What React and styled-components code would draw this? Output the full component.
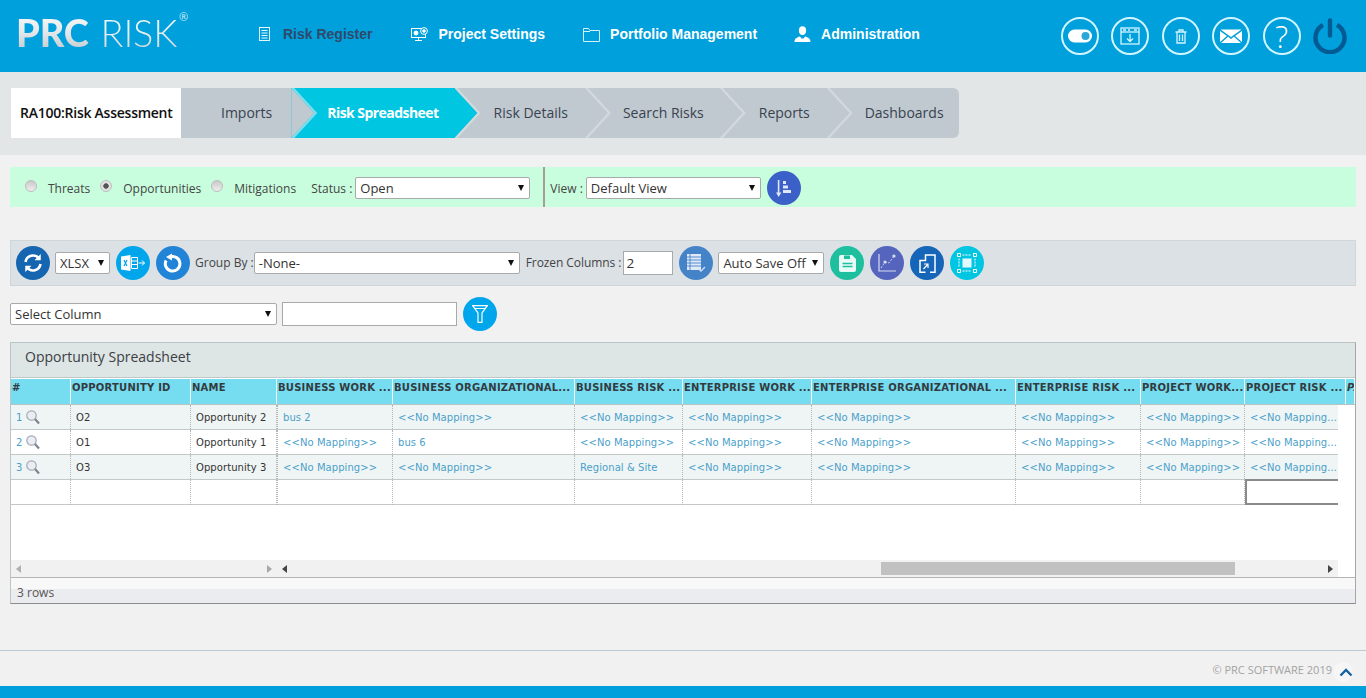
import React from 'react';
import styled, { createGlobalStyle, css } from 'styled-components';

const Global = createGlobalStyle`
  html, body { margin: 0; padding: 0; background: #f1f1f1; }
  body { font-family: "Open Sans", "Liberation Sans", sans-serif; color: #444; }
  #root { min-height: 698px; display: flex; flex-direction: column; overflow: hidden; }
  * { box-sizing: border-box; }
`;

const TopBar = styled.header`
  height: 72px; background: #00a0dc; display: flex; align-items: flex-start;
  padding-left: 16px; padding-right: 19px; flex: none;
`;
const Logo = styled.div`
  width: 242px; height: 72px; padding-top: 8px; display: flex; align-items: flex-start;
  font-family: Lato, "Open Sans", sans-serif; font-size: 38px; line-height: 48px; position: relative;
  letter-spacing: -0.2px;
`;
const LogoPRC = styled.span`
  font-weight: 900; margin-right: 12px;
  background: linear-gradient(180deg, #fff 0%, #e4e8ea 50%, #b9c2c7 100%);
  -webkit-background-clip: text; background-clip: text; color: transparent;
`;
const LogoRisk = styled.span`
  font-weight: 300;
  background: linear-gradient(180deg, #fff 0%, #e8ecee 55%, #c5ccd0 100%);
  -webkit-background-clip: text; background-clip: text; color: transparent;
`;
const LogoReg = styled.span`
  position: absolute; left: 163px; top: 10px; font-size: 11px; line-height: 14px; color: #d7eef7;
  font-family: "Open Sans", sans-serif;
`;
const Nav = styled.nav`display: flex; align-items: center; height: 68px; gap: 38px;`;
const NavItem = styled.a`
  display: flex; align-items: center; gap: ${p => p.$gap || 10}px; margin-left: ${p => p.$ml ?? 0}px;
  font-family: "Liberation Sans", Arial, sans-serif; font-weight: 700; font-size: 14px; white-space: nowrap;
  color: ${p => p.$active ? '#2f4a6b' : '#fff'};
`;
const TopActions = styled.div`margin-left: auto; display: flex; align-items: center; gap: 12.4px; height: 72px;`;
const RingButton = styled.div`
  width: 38px; height: 38px; border-radius: 50%; border: 2px solid #d3f5ff; display: flex;
  align-items: center; justify-content: center; color: #fff; flex: none;
`;
const HelpMark = styled.span`font-family: "Open Sans", sans-serif; font-size: 31px; line-height: 34px; color: #fff; font-weight: 300;`;

const CrumbZone = styled.div`height: 83px; background: #e2e6e7; padding: 16px 0 0 11px; flex: none;`;
const CrumbBar = styled.div`
  display: flex; width: 948px; height: 50px; background: #bfc9cf; border-radius: 0 6px 6px 0; overflow: hidden;
  font-size: 14px; line-height: 50px;
`;
const CrumbTitle = styled.div`
  width: 170px; background: #fff; color: #111; font-weight: 600; padding-left: 9px; white-space: nowrap; flex: none;
  letter-spacing: -0.25px;
`;
const Crumb = styled.div`
  position: relative; height: 50px; white-space: nowrap; flex: none;
  padding: 0 ${p => p.$pr}px 0 ${p => p.$pl}px;
  color: #3a4250;
  ${p => p.$active && css`
    background: #00c6e2; color: #fff; font-weight: 700; letter-spacing: -0.55px;
  `}
  ${p => !p.$last && css`
    &::before {
      content: ''; position: absolute; z-index: 2; top: 0; left: 100%; width: 23px; height: 50px;
      background: ${p.$active ? '#00c6e2' : '#bfc9cf'}; clip-path: polygon(0 0, 23px 25px, 0 50px);
    }
    &::after {
      content: ''; position: absolute; z-index: 3; top: 0; left: 100%; width: 27px; height: 50px;
      background: ${p.$next ? '#7fdcec' : '#d3d9dd'};
      clip-path: polygon(0 0, 3px 0, 26px 25px, 3px 50px, 0 50px, 23px 25px);
    }
  `}
`;

const Main = styled.main`padding: 12px 10px 0; flex: none;`;
const FilterBand = styled.div`
  height: 40px; background: #c8fedd; display: flex; align-items: center; font-size: 12px; color: #444;
  padding: 2px 0 0 15px;
`;
const Radio = styled.span`
  width: 12px; height: 12px; border-radius: 50%; border: 1px solid #bdbdbd; flex: none; margin-top: -4px;
  background: ${p => p.$on ? 'radial-gradient(circle, #555 0 2.4px, #ddd 3px, #f0f0f0 100%)' : 'linear-gradient(180deg, #c9c9c9, #efefef)'};
  margin-right: 11px;
`;
const Label = styled.span`
  white-space: nowrap; margin-right: ${p => p.$mr ?? 0}px; margin-left: ${p => p.$ml ?? 0}px; margin-top: ${p => p.$mt ?? 0}px;
  font-size: 12px; color: ${p => p.$c || '#444'}; letter-spacing: ${p => p.$ls ?? 0}px;
`;
const Dropdown = styled.div`
  position: relative; flex: none; width: ${p => p.$w}px; height: ${p => p.$h || 22}px; background: #fff;
  border: 1px solid #a9a9a9; border-radius: 2px; font-size: 13px; line-height: ${p => (p.$h || 22) - 2}px;
  color: #333; padding-left: 4px; white-space: nowrap; margin-left: ${p => p.$ml ?? 0}px;
  &::after {
    content: ''; position: absolute; right: ${p => p.$ar ?? 5}px; top: 50%; margin-top: -3px;
    border-left: 3.5px solid transparent; border-right: 3.5px solid transparent; border-top: 6px solid #111;
  }
`;
const VRule = styled.span`
  width: 2px; height: 40px; background: #a89b98; margin: -2px 5px 0 13px; flex: none; align-self: flex-start;
`;
const RoundBtn = styled.div`
  width: 34px; height: 34px; border-radius: 50%; background: ${p => p.$bg}; flex: none; color: #fff;
  display: flex; align-items: center; justify-content: center; margin-left: ${p => p.$ml ?? 0}px;
`;
const Toolbar = styled.div`
  height: 46px; margin-top: 33px; background: #dbe1e4; border: 1px solid #ced6d9; display: flex; align-items: center;
  padding-left: 5px; font-size: 12px;
`;
const NumberBox = styled.div`
  width: 50px; height: 24px; background: #fff; border: 1px solid #a9a9a9; font-size: 13.5px; line-height: 23px;
  padding-left: 2px; color: #333; flex: none; margin-left: 2px; margin-top: -1px;
`;
const ColumnFilter = styled.div`height: 34px; margin-top: 11px; display: flex; align-items: center;`;
const TextBox = styled.div`width: 175px; height: 24px; background: #fff; border: 1px solid #a9a9a9; flex: none; margin-left: 5px;`;

const Panel = styled.section`
  margin-top: 11px; width: 1346px; border: 1px solid #bcc5c6; border-bottom: 1px solid #8c8c8c;
  border-right: 1px solid #a5a8a8; border-left: 1px solid #bcc5c6; background: #fff;
`;
const PanelTitle = styled.div`
  height: 35px; background: #dde5e5; font-size: 14px; line-height: 28px; padding-left: 14px; color: #3c4044;
  border-bottom: 1px solid #c0c8c8;
`;
const tableFont = css`font-family: "DejaVu Sans", Verdana, sans-serif; font-size: 10px; white-space: nowrap;`;
const HeadRow = styled.div`
  display: grid; grid-template-columns: 60px 120px 86px 116px 182px 108px 129px 204px 125px 104px 101px 1fr;
  height: 27px; background: #76dcef; border-top: 1px solid #fff; border-bottom: 1px solid #b8c4c4;
`;
const HeadCell = styled.div`
  ${tableFont}; font-weight: 700; color: #333a40; line-height: 18px; padding-left: 1px; overflow: hidden;
  border-right: 1px solid #eefafc; letter-spacing: 0.22px;
  font-style: ${p => p.$italic ? 'italic' : 'normal'};
`;
const RowsArea = styled.div`height: 155px; background: #fff;`;
const Row = styled.div`
  display: grid; width: 1327px; height: 25px; border-bottom: 1px solid #c4c8c8;
  grid-template-columns: 60px 120px 86px 116px 182px 108px 129px 204px 125px 104px 93px;
  background: ${p => p.$odd ? '#eff5f4' : '#fff'};
`;
const Cell = styled.div`
  ${tableFont}; overflow: hidden; padding: 1px 0 0 ${p => p.$pl ?? 5}px; letter-spacing: 0.07px;
  color: ${p => p.$link ? '#4b9fcb' : '#333'};
  border-right: ${p => p.$plain ? 'none' : '1px dotted #b5b5b5'};
  ${p => p.$frozen && 'border-left: 1px dotted #b5b5b5;'}
  ${p => p.$active && 'border: 2px solid #8a8a8a; border-right: none; margin-top: -1px; height: 26px;'}
  display: flex; align-items: center;
`;
const RowNum = styled.span`color: #4b9fcb; margin-right: 4px;`;
const ScrollRow = styled.div`display: flex; height: 17px; background: #fff;`;
const ScrollLeft = styled.div`width: 266px; background: #f1f1f1; display: flex; align-items: center; justify-content: space-between; padding: 0 5px; flex: none;`;
const ScrollRight = styled.div`width: 1061px; background: #f1f1f1; display: flex; align-items: center; padding: 0 5px; flex: none;`;
const Thumb = styled.div`width: 354px; height: 13px; background: #c1c1c1; margin-left: 594px;`;
const ArrowTip = styled.span`
  width: 0; height: 0; border-top: 4px solid transparent; border-bottom: 4px solid transparent; flex: none;
  ${p => p.$dir === 'left' ? `border-right: 5px solid ${p.$c};` : `border-left: 5px solid ${p.$c};`}
  margin-left: ${p => p.$auto ? 'auto' : '0'};
`;
const StatusBar = styled.div`
  height: 26px; border-top: 1px solid #b5b5b5; font-size: 12px; line-height: 30px; padding-left: 6px; color: #555;
  background: linear-gradient(180deg, #f8f8f8 0 45%, #ebecef 45% 100%);
`;
const FootZone = styled.footer`
  margin-top: 46px; height: 36px; border-top: 1px solid #bccbd3; display: flex; align-items: flex-start; justify-content: flex-end;
  padding: 10px 13px 0 0; font-size: 11px; color: #a3a3a3; flex: none;
`;
const Copyright = styled.span`white-space: nowrap; line-height: 18px;`;
const UpButton = styled.div`
  width: 20px; height: 20px; border-radius: 50%; background: #f6f6f6; margin-left: 1px; margin-top: 1px;
  display: flex; align-items: center; justify-content: center; color: #14629f; padding: 1px 0 0 5px; overflow: visible;
`;
const BottomBar = styled.div`flex: 1 0 12px; min-height: 12px; background: #00a0dc;`;

const IcoRegister = () => (
  <svg width="13" height="14" viewBox="0 0 13 14" fill="none" stroke="#e6f7fd" strokeWidth="1">
    <rect x="1.5" y="0.5" width="10" height="13" /><path d="M3.5 3.5h6M3.5 6h6M3.5 8.5h6M3.5 11h6" />
  </svg>
);
const IcoSettings = () => (
  <svg width="18" height="16" viewBox="0 0 18 16" fill="none" stroke="#fff" strokeWidth="1">
    <rect x="0.5" y="2.5" width="14" height="9" /><path d="M7.5 12v2M4 14.5h7" />
    <circle cx="5" cy="7" r="2" fill="#fff" /><circle cx="13" cy="5" r="3.4" fill="#00a0dc" /><circle cx="13" cy="5" r="1.3" fill="#fff" />
  </svg>
);
const IcoFolder = () => (
  <svg width="17" height="15" viewBox="0 0 17 15" fill="none" stroke="#d6f3fc" strokeWidth="1">
    <path d="M0.5 14.5V1.5h5l1.5 2h9.500v11zM0.5 4.500h6.500" />
  </svg>
);
const IcoUser = () => (
  <svg width="17" height="16" viewBox="0 0 17 16" fill="#fff">
    <ellipse cx="8.5" cy="4.6" rx="3.6" ry="4.4" />
    <path d="M0.5 16c0-3.500 2.500-4.600 5.400-5.400L8 13l.5-1 .5 1 2.100-2.400c2.900.8 5.400 1.900 5.400 5.400z" />
  </svg>
);
const IcoToggle = () => (
  <svg width="24" height="14" viewBox="0 0 24 14">
    <rect width="24" height="13" y="0.5" rx="6.5" fill="#fff" /><circle cx="17.5" cy="7" r="4" fill="#2aa6d8" />
  </svg>
);
const IcoDownload = () => (
  <svg width="20" height="18" viewBox="0 0 20 18" fill="none" stroke="#d3f5ff" strokeWidth="1.300">
    <rect x="1" y="1" width="18" height="16" /><path d="M1 5h18" />
    <path d="M3 3h3M8 3h2M14 3h3" /><path d="M10 7v7M7 11.500l3 3 3-3" />
  </svg>
);
const IcoTrash = () => (
  <svg width="12" height="15" viewBox="0 0 12 15" fill="none" stroke="#d3f5ff" strokeWidth="1.300">
    <path d="M0.500 3h11M4 3V1h4v2M2 3v11h8V3M4.500 5.500v6.500M7.500 5.500v6.500" />
  </svg>
);
const IcoMail = () => (
  <svg width="22" height="14" viewBox="0 0 22 14">
    <path d="M0.500 0.500h21L11 8z" fill="#fff" /><path d="M0 2l7 5-7 6zM22 2l-7 5 7 6zM1 14l7.200-6.200L11 10l2.800-2.200L21 14z" fill="#fff" />
  </svg>
);
const IcoPower = () => (
  <svg width="34" height="36" viewBox="0 0 34 36" fill="none" stroke="#045a92" strokeWidth="4.400" strokeLinecap="round">
    <path d="M17 2.500v15" /><path d="M10 7a14.500 14.500 0 1 0 14 0" strokeLinecap="butt" />
  </svg>
);
const IcoRefresh = () => (
  <svg width="20" height="20" viewBox="0 0 20 20" fill="none" stroke="#fff" strokeWidth="2.600">
    <path d="M2.500 9a7.600 7.600 0 0 1 13.500-3.500" /><path d="M17.500 11a7.600 7.600 0 0 1-13.500 3.500" />
    <path d="M17.500 1.500v5.500h-5.500z" fill="#fff" strokeWidth="0.500" /><path d="M2.500 18.500v-5.500h5.500z" fill="#fff" strokeWidth="0.500" />
  </svg>
);
const IcoExcel = () => (
  <svg width="24" height="18" viewBox="0 0 24 18" fill="none">
    <path d="M0 2.500 9.500 1v16L0 15.500z" fill="#fff" /><path d="M3 6l3 6M6 6l-3 6" stroke="#00a6ec" strokeWidth="1.200" />
    <path d="M10.500 3.500h6v11h-6z" stroke="#fff" /><path d="M10.500 7h6M10.500 10.500h6" stroke="#fff" />
    <path d="M17.500 9h6M21 6.500 23.500 9 21 11.500" stroke="#fff" />
  </svg>
);
const IcoUndo = () => (
  <svg width="20" height="20" viewBox="0 0 20 20" fill="none" stroke="#fff" strokeWidth="3">
    <path d="M7.500 3.800a7.300 7.300 0 1 1-4.400 3.700" /><path d="M9 0.500v7L3 4z" fill="#fff" strokeWidth="0" />
  </svg>
);
const IcoFunnel = () => (
  <svg width="16" height="18" viewBox="0 0 16 18" fill="none" stroke="#fff" strokeWidth="1.200">
    <path d="M0.700 0.700h14.600L10 8v9.300H6V8zM3 3.500h10" />
  </svg>
);
const IcoSort = () => (
  <svg width="15" height="17" viewBox="0 0 15 17" fill="#dfe7fa">
    <path d="M1.800 0h1.600v12.500h2L2.600 17 0 12.500h1.800z" /><rect x="7" y="1" width="3" height="3" /><rect x="7" y="5.500" width="5" height="3" /><rect x="7" y="10" width="8" height="3" />
  </svg>
);
const IcoList = () => (
  <svg width="20" height="20" viewBox="0 0 20 20" fill="none" stroke="#fff">
    <path d="M1 1h14v16H1z" fill="#dfeaf6" stroke="none" />
    <path d="M1 4h14M1 7h14M1 10h14M1 13h14M4 1v16" stroke="#4583c9" strokeWidth="0.900" />
    <path d="M13 16l2 2 4-4" stroke="#cfe0f2" strokeWidth="1.400" />
  </svg>
);
const IcoSave = () => (
  <svg width="17" height="17" viewBox="0 0 17 17">
    <path d="M2 0h11l4 4v11a2 2 0 0 1-2 2H2a2 2 0 0 1-2-2V2a2 2 0 0 1 2-2z" fill="#e8fbf7" />
    <rect x="5" y="0.500" width="6" height="3.500" fill="#1dbf9f" /><path d="M3.500 8.500h10M3.500 11.500h10" stroke="#1dbf9f" strokeWidth="1.400" />
  </svg>
);
const IcoChart = () => (
  <svg width="18" height="18" viewBox="0 0 18 18" fill="none" stroke="#d7dcf2" strokeWidth="1.200">
    <path d="M1 0v17h17" /><path d="M3 14l4-6 4 1 5-7" strokeWidth="0.900" strokeDasharray="2 1.500" />
    <circle cx="7" cy="8" r="1" fill="#fff" /><circle cx="16" cy="2" r="1" fill="#fff" />
  </svg>
);
const IcoSteps = () => (
  <svg width="17" height="19" viewBox="0 0 17 19" fill="none" stroke="#fff" strokeWidth="1.500">
    <path d="M6.500 18.200H1V6.500h5.500V1H16v17.200h-5" /><path d="M4.500 15l4.500-5M9 14v-4H5" strokeWidth="1.200" />
  </svg>
);
const IcoFit = () => (
  <svg width="20" height="20" viewBox="0 0 20 20" fill="none">
    <rect x="5.500" y="5.500" width="9" height="9" fill="#e4f9fd" />
    <path d="M0.500 0.500h3v3h-3zM16.500 0.500h3v3h-3zM0.500 16.500h3v3h-3zM16.500 16.500h3v3h-3z" stroke="#fff" />
    <path d="M5.500 2h9M5.500 18h9M2 5.500v9M18 5.500v9" stroke="#fff" strokeDasharray="2 1" />
  </svg>
);
const IcoLens = () => (
  <svg width="14" height="15" viewBox="0 0 14 15" fill="none">
    <circle cx="5.500" cy="5.500" r="4.700" fill="#eaedf4" stroke="#a5a9b3" strokeWidth="1.200" /><path d="M9 9l4 4.500" stroke="#7f838b" strokeWidth="2.200" />
  </svg>
);
const IcoChevUp = () => (
  <svg width="14" height="9" viewBox="0 0 14 9" fill="none" stroke="currentColor" strokeWidth="2.400"><path d="M1.500 7.500 7 2l5.500 5.500" /></svg>
);

const heads = ['#', 'OPPORTUNITY ID', 'NAME', 'BUSINESS WORK ...', 'BUSINESS ORGANIZATIONAL...', 'BUSINESS RISK ...', 'ENTERPRISE WORK ...', 'ENTERPRISE ORGANIZATIONAL ...', 'ENTERPRISE RISK ...', 'PROJECT WORK...', 'PROJECT RISK ...', 'PA'];
const N = '<<No Mapping>>';
const C = '<<No Mapping...';
const rows = [
  ['O2', 'Opportunity 2', 'bus 2', N, N, N, N, N, N, C],
  ['O1', 'Opportunity 1', N, 'bus 6', N, N, N, N, N, C],
  ['O3', 'Opportunity 3', N, N, 'Regional & Site', N, N, N, N, C],
];

export default function App() {
  return (
    <>
      <Global />
      <TopBar>
        <Logo><LogoPRC>PRC</LogoPRC><LogoRisk>RISK</LogoRisk><LogoReg>®</LogoReg></Logo>
        <Nav>
          <NavItem $active $gap={12}><IcoRegister />Risk Register</NavItem>
          <NavItem $ml={1} $gap={9}><IcoSettings />Project Settings</NavItem>
          <NavItem $gap={10}><IcoFolder />Portfolio Management</NavItem>
          <NavItem $ml={-1} $gap={10}><IcoUser />Administration</NavItem>
        </Nav>
        <TopActions>
          <RingButton><IcoToggle /></RingButton>
          <RingButton><IcoDownload /></RingButton>
          <RingButton><IcoTrash /></RingButton>
          <RingButton><IcoMail /></RingButton>
          <RingButton><HelpMark>?</HelpMark></RingButton>
          <IcoPower />
        </TopActions>
      </TopBar>
      <CrumbZone>
        <CrumbBar>
          <CrumbTitle>RA100:Risk Assessment</CrumbTitle>
          <Crumb $pl={40} $pr={19} $next>Imports</Crumb>
          <Crumb $pl={36} $pr={16} $active>Risk Spreadsheet</Crumb>
          <Crumb $pl={39} $pr={17}>Risk Details</Crumb>
          <Crumb $pl={38} $pr={16}>Search Risks</Crumb>
          <Crumb $pl={39} $pr={17}>Reports</Crumb>
          <Crumb $pl={38} $pr={15} $last>Dashboards</Crumb>
        </CrumbBar>
      </CrumbZone>
      <Main>
        <FilterBand>
          <Radio /><Label $mr={10}>Threats</Label>
          <Radio $on /><Label $mr={10}>Opportunities</Label>
          <Radio /><Label $mr={15}>Mitigations</Label>
          <Label $mr={3}>Status :</Label>
          <Dropdown $w={175}>Open</Dropdown>
          <VRule />
          <Label $mr={3}>View :</Label>
          <Dropdown $w={175}>Default View</Dropdown>
          <RoundBtn $bg="#3b60c8" $ml={6}><IcoSort /></RoundBtn>
        </FilterBand>
        <Toolbar>
          <RoundBtn $bg="#1565b0"><IcoRefresh /></RoundBtn>
          <Dropdown $w={55} $ml={5}>XLSX</Dropdown>
          <RoundBtn $bg="#00a6ec" $ml={6}><IcoExcel /></RoundBtn>
          <RoundBtn $bg="#2184d6" $ml={6}><IcoUndo /></RoundBtn>
          <Label $ml={5} $mt={-2}>Group By :</Label>
          <Dropdown $w={266}>-None-</Dropdown>
          <Label $ml={6} $mt={-2} $ls={-0.07}>Frozen Columns :</Label>
          <NumberBox>2</NumberBox>
          <RoundBtn $bg="#4583c9" $ml={6}><IcoList /></RoundBtn>
          <Dropdown $w={106} $ml={5}>Auto Save Off</Dropdown>
          <RoundBtn $bg="#1dbf9f" $ml={6}><IcoSave /></RoundBtn>
          <RoundBtn $bg="#5564bd" $ml={6}><IcoChart /></RoundBtn>
          <RoundBtn $bg="#1565b8" $ml={6}><IcoSteps /></RoundBtn>
          <RoundBtn $bg="#00c6e2" $ml={6}><IcoFit /></RoundBtn>
        </Toolbar>
        <ColumnFilter>
          <Dropdown $w={267}>Select Column</Dropdown>
          <TextBox />
          <RoundBtn $bg="#00a6ec" $ml={6}><IcoFunnel /></RoundBtn>
        </ColumnFilter>
        <Panel>
          <PanelTitle>Opportunity Spreadsheet</PanelTitle>
          <HeadRow>
            {heads.map((h, i) => <HeadCell key={h} $italic={i === 11}>{h}</HeadCell>)}
          </HeadRow>
          <RowsArea>
            {rows.map((r, i) => (
              <Row key={r[0]} $odd={i % 2 === 0}>
                <Cell><RowNum>{i + 1}</RowNum><IcoLens /></Cell>
                {r.map((v, j) => (
                  <Cell key={j} $link={j > 1} $frozen={j === 2} $plain={j === 9}>{v}</Cell>
                ))}
              </Row>
            ))}
            <Row>
              {Array.from({ length: 10 }, (_, j) => <Cell key={j} $frozen={j === 3} />)}
              <Cell $active />
            </Row>
          </RowsArea>
          <ScrollRow>
            <ScrollLeft><ArrowTip $dir="left" $c="#b0b0b0" /><ArrowTip $c="#a8a8a8" /></ScrollLeft>
            <ScrollRight><ArrowTip $dir="left" $c="#444" /><Thumb /><ArrowTip $c="#444" $auto /></ScrollRight>
          </ScrollRow>
          <StatusBar>3 rows</StatusBar>
        </Panel>
      </Main>
      <FootZone>
        <Copyright>© PRC SOFTWARE 2019</Copyright>
        <UpButton><IcoChevUp /></UpButton>
      </FootZone>
      <BottomBar />
    </>
  );
}
